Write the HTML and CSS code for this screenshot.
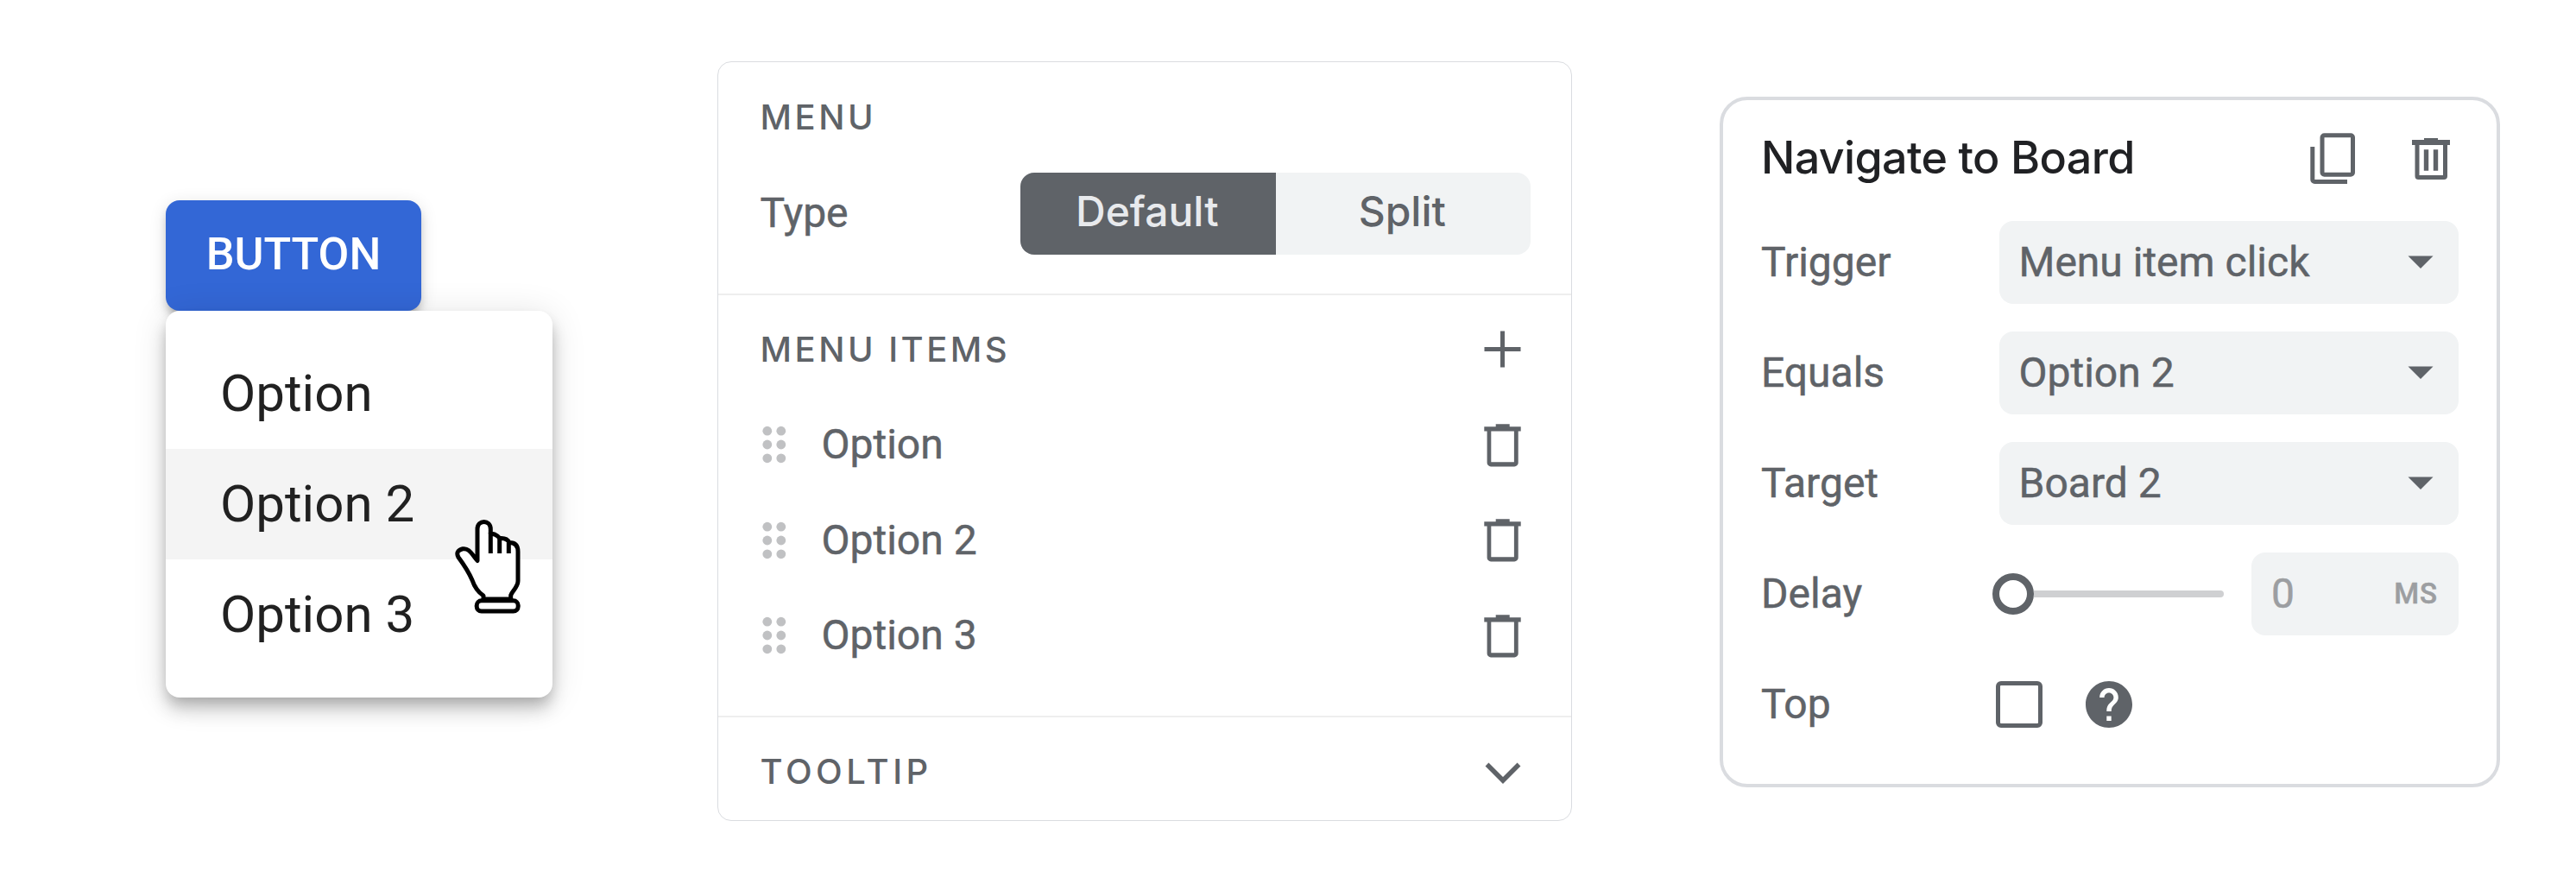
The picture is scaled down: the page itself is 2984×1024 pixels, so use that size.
FILE: index.html
```
<!DOCTYPE html>
<html lang="en">
<head>
<meta charset="utf-8">
<title>Menu button settings</title>
<link rel="stylesheet" href="styles.css">
</head>
<body>
<svg width="0" height="0" class="defs" aria-hidden="true">
  <symbol id="grip" viewBox="0 0 28 44">
    <circle cx="5.8" cy="6.2" r="5.4"/><circle cx="21.8" cy="6.2" r="5.4"/>
    <circle cx="5.8" cy="22" r="5.4"/><circle cx="21.8" cy="22" r="5.4"/>
    <circle cx="5.8" cy="37.8" r="5.4"/><circle cx="21.8" cy="37.8" r="5.4"/>
  </symbol>
  <symbol id="bin" viewBox="0 0 43 50">
    <path d="M0.3 3.2h13.4V.3h16v2.9h13v5.3h-3V45a4.4 4.4 0 0 1-4.4 4.4H8A4.4 4.4 0 0 1 3.600 45V8.500H.3zM8.300 8.500v35.700h26.600V8.500z" fill-rule="evenodd"/>
  </symbol>
</svg>
<main class="board">
  <section class="demo">
    <button class="demo-button">BUTTON</button>
    <ul class="menu">
      <li class="menu-item">Option</li>
      <li class="menu-item hovered">Option 2</li>
      <li class="menu-item">Option 3</li>
    </ul>
    <svg class="pointer" width="80" height="114" viewBox="0 0 80 114">
      <g fill="#fff" stroke="#000" stroke-width="5" stroke-linejoin="round" stroke-linecap="round">
        <path d="M34 94v-4C28 86 24 81 21 72C18 65 12 55 5 45.500C2 40 5 37 10 35.800C17 34.500 20 41 27 49.500V13C27 1.500 42.300 1.500 42.300 13V18L47 19C50 20.500 51 21 53 23.500C58 23 62 24.500 64 28.500C71 28.500 74 32 74 39V73C74 80 67 85 65.700 89.500V94z"/>
        <path d="M42.300 17v24M52.700 24v17M63.300 28.500v12.500" fill="none" stroke-linecap="butt"/>
        <rect x="26.200" y="95.800" width="48" height="12.200" rx="5.500"/>
      </g>
    </svg>
  </section>

  <section class="panel">
    <div class="block type-block">
      <h2 class="heading">MENU</h2>
      <div class="type-row">
        <span class="type-label">Type</span>
        <div class="toggle">
          <span class="segment selected">Default</span>
          <span class="segment">Split</span>
        </div>
      </div>
    </div>
    <div class="block items-block">
      <div class="bar">
        <h2 class="heading">MENU ITEMS</h2>
        <svg width="43" height="43" viewBox="0 0 43 43"><path d="M21.500.5v42M.5 21.500h42" stroke="#5f6368" stroke-width="5"/></svg>
      </div>
      <ul class="items">
        <li class="item"><svg class="grip" width="28" height="44"><use href="#grip"/></svg><span class="item-name">Option</span><svg class="bin" width="43" height="50"><use href="#bin"/></svg></li>
        <li class="item"><svg class="grip" width="28" height="44"><use href="#grip"/></svg><span class="item-name">Option 2</span><svg class="bin" width="43" height="50"><use href="#bin"/></svg></li>
        <li class="item"><svg class="grip" width="28" height="44"><use href="#grip"/></svg><span class="item-name">Option 3</span><svg class="bin" width="43" height="50"><use href="#bin"/></svg></li>
      </ul>
    </div>
    <div class="block tooltip-block">
      <div class="bar">
        <h2 class="heading wide">TOOLTIP</h2>
        <svg class="chevron" width="42" height="26" viewBox="0 0 42 26"><path d="M2.500 2.500L21 21L39.500 2.500" fill="none" stroke="#5f6368" stroke-width="5.500"/></svg>
      </div>
    </div>
  </section>

  <section class="card">
    <header class="card-head">
      <h1 class="title">Navigate to Board</h1>
      <div class="actions">
        <svg width="52" height="64" viewBox="0 0 52 64" fill="none" stroke="#5f6368" stroke-width="5">
          <rect x="14" y="4.700" width="35.500" height="45.500" rx="2.500"/>
          <path d="M2.800 18v38a2.500 2.500 0 0 0 2.500 2.500H43"/>
        </svg>
        <svg width="44" height="64" viewBox="0 0 44 64" fill="#5f6368">
          <path d="M0 10h14V8h16v2h14v6h-3v36a4 4 0 0 1-4 4H7.500a4 4 0 0 1-4-4V16H0zM8.500 16v35H36V16z" fill-rule="evenodd"/>
          <path d="M13.800 21.300h5.400v24.400h-5.400zM24.800 21.300h5.400v24.400h-5.400z"/>
        </svg>
      </div>
    </header>
    <div class="form">
      <span class="label">Trigger</span>
      <div class="field"><span>Menu item click</span><svg width="30" height="16" viewBox="0 0 30 16"><path d="M.5.5h29L15 15z"/></svg></div>
      <span class="label">Equals</span>
      <div class="field"><span>Option 2</span><svg width="30" height="16" viewBox="0 0 30 16"><path d="M.5.5h29L15 15z"/></svg></div>
      <span class="label">Target</span>
      <div class="field"><span>Board 2</span><svg width="30" height="16" viewBox="0 0 30 16"><path d="M.5.5h29L15 15z"/></svg></div>
      <span class="label">Delay</span>
      <div class="delay">
        <div class="slider"><span class="knob"></span><span class="track"></span></div>
        <div class="field amount"><span>0</span><span class="unit">MS</span></div>
      </div>
      <span class="label">Top</span>
      <div class="top-options">
        <span class="checkbox"></span>
        <svg width="54" height="54" viewBox="2 2 20 20" fill="#5f6368"><path d="M12 2C6.480 2 2 6.480 2 12s4.480 10 10 10 10-4.480 10-10S17.520 2 12 2zm1 17h-2v-2h2v2zm2.070-7.750l-.9.920C13.450 12.900 13 13.500 13 15h-2v-.5c0-1.100.45-2.100 1.170-2.830l1.240-1.260c.37-.36.59-.86.59-1.410 0-1.100-.9-2-2-2s-2 .9-2 2H8c0-2.210 1.790-4 4-4s4 1.790 4 4c0 .88-.36 1.680-.93 2.250z"/></svg>
      </div>
    </div>
  </section>
</main>
</body>
</html>
```
FILE: styles.css
```
* { box-sizing: border-box; }

body {
  margin: 0;
  background: #fff;
  color: #5f6368;
  font: 400 48px/56px Roboto, sans-serif;
}

h1, h2, ul { margin: 0; padding: 0; list-style: none; }
svg { display: block; flex: none; }
.defs { position: absolute; }

.board {
  display: flex;
  align-items: flex-start;
  height: 1024px;
  padding-left: 192px;
}

/* Button with its open menu */
.demo {
  position: relative;
  width: 448px;
  margin-top: 232px;
}

.demo-button {
  display: block;
  width: 296px;
  height: 128px;
  padding: 0 0 2px;
  border: 0;
  border-radius: 16px;
  background: #3367d6;
  color: #fff;
  font: 500 52px/60px Roboto, sans-serif;
  box-shadow: 0 12px 8px -8px rgba(0,0,0,.2), 0 8px 8px rgba(0,0,0,.14), 0 4px 20px rgba(0,0,0,.12);
}

.menu {
  position: relative;
  padding: 32px 0;
  border-radius: 16px;
  background: #fff;
  box-shadow: 0 8px 16px -4px rgba(0,0,0,.2), 0 16px 20px rgba(0,0,0,.14), 0 4px 40px rgba(0,0,0,.12);
}

.menu-item {
  height: 128px;
  padding-left: 63px;
  color: #212121;
  font-size: 60px;
  line-height: 127px;
}

.hovered { background: #f4f4f4; }

.pointer {
  position: absolute;
  left: 334px;
  top: 368px;
}

/* Menu settings panel */
.panel {
  width: 990px;
  height: 880px;
  margin: 71px 0 0 191px;
  border: 1px solid #dadce0;
  border-radius: 16px;
  -webkit-text-stroke: .5px;
}

.block { padding: 0 47px 0 48.500px; }
.block + .block { border-top: 2px solid #eee; }

.heading {
  font: 500 40px/40px Inter, sans-serif;
  letter-spacing: 3.500px;
  -webkit-text-stroke: 0;
}

.wide { letter-spacing: 4.500px; }

.type-block { height: 268px; padding-top: 44px; }

.type-row {
  display: flex;
  align-items: center;
  justify-content: space-between;
  margin-top: 44px;
}

.type-label { padding-bottom: 2px; }

.toggle {
  display: flex;
  width: 591px;
  height: 95px;
  border-radius: 16px;
  overflow: hidden;
  background: #f1f3f4;
  -webkit-text-stroke: 0;
}

.segment {
  flex: 1;
  padding-right: 2px;
  font: 500 48px/90px Inter, sans-serif;
  text-align: center;
}

.selected { background: #5f6368; color: #e8eaed; }

.items-block { height: 489px; padding-top: 38px; }

.bar {
  display: flex;
  align-items: center;
  justify-content: space-between;
  height: 49px;
  padding-right: 11px;
}

.items { margin-top: 31px; }

.item {
  display: flex;
  align-items: center;
  height: 110.600px;
  padding: 0 11px 0 2px;
}

.grip { fill: #c0c1c3; }
.item-name { margin-left: 41px; }
.bin { margin: 1px 0 0 auto; fill: #5f6368; }

.tooltip-block { padding-top: 38px; }
.chevron { margin-top: 4px; }

/* Interaction card */
.card {
  width: 904px;
  height: 800px;
  margin: 112px 0 0 171px;
  padding: 0 44px;
  border: 4px solid #dadce0;
  border-radius: 32px;
  -webkit-text-stroke: .5px;
}

.card-head {
  display: flex;
  justify-content: space-between;
  height: 140px;
  padding: 36px 10px 0 0;
}

.title {
  color: #202124;
  font: 500 52px/62px Inter, sans-serif;
  letter-spacing: -.65px;
  -webkit-text-stroke: 0;
}

.actions { display: flex; gap: 66px; }

.form {
  display: grid;
  grid-template-columns: 276px 1fr;
  grid-auto-rows: 96px;
  row-gap: 32px;
  align-items: center;
}

.field {
  display: flex;
  align-items: center;
  justify-content: space-between;
  height: 96px;
  padding: 0 29px 0 22.500px;
  border-radius: 16px;
  background: #f1f3f4;
  fill: #5f6368;
}

.delay { display: flex; gap: 32px; margin-left: -8px; }

.slider { display: flex; align-items: center; width: 268px; }

.knob {
  width: 48px;
  height: 48px;
  border: 8px solid #5f6368;
  border-radius: 50%;
}

.track {
  flex: 1;
  height: 8px;
  border-radius: 0 4px 4px 0;
  background: #cfd0d2;
}

.amount { flex: 1; padding: 0 24px 0 23px; color: #9c9ea1; }

.unit {
  font-size: 33px;
  font-weight: 500;
  letter-spacing: 1px;
}

.top-options { display: flex; gap: 50px; margin-left: -4px; }

.checkbox {
  width: 54px;
  height: 54px;
  border: 5.500px solid #5f6368;
  border-radius: 6px;
}
```
